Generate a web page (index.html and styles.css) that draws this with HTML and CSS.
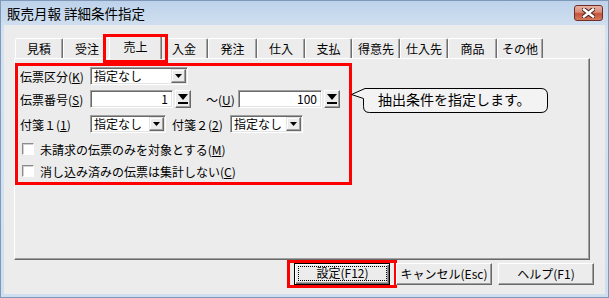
FILE: index.html
```html
<!DOCTYPE html>
<html lang="ja">
<head>
<meta charset="utf-8">
<title>販売月報 詳細条件指定</title>
<link rel="stylesheet" href="styles.css">
</head>
<body>
<div class="window">
  <div class="titlebar">
    <span class="title">販売月報 詳細条件指定</span>
    <button class="close" aria-label="閉じる">
      <svg width="13" height="10" viewBox="0 0 13 10"><path d="M2 1.5 L11 8.5 M11 1.5 L2 8.5" stroke="#4a2420" stroke-width="4.5" stroke-linecap="square" fill="none"/><path d="M2 1.5 L11 8.5 M11 1.5 L2 8.5" stroke="#fff" stroke-width="2.5" stroke-linecap="square" fill="none"/></svg>
    </button>
  </div>
  <div class="client">
    <div class="tabstrip">
      <div class="tab w48">見積</div>
      <div class="tab w48">受注</div>
      <div class="tab sel">売上</div>
      <div class="tab w48">入金</div>
      <div class="tab w49">発注</div>
      <div class="tab w48">仕入</div>
      <div class="tab w47">支払</div>
      <div class="tab w48">得意先</div>
      <div class="tab w48">仕入先</div>
      <div class="tab w49">商品</div>
      <div class="tab w46">その他</div>
    </div>
    <div class="panel">
      <div class="group">
        <div class="row r1">
          <span class="lbl">伝票区分(<u>K</u>)</span>
          <div class="combo c1"><span class="val">指定なし</span><span class="ddbtn"><svg width="7" height="4" viewBox="0 0 7 4"><polygon points="0,0 7,0 3.5,4" fill="#000"/></svg></span></div>
        </div>
        <div class="row r2">
          <span class="lbl">伝票番号(<u>S</u>)</span>
          <div class="field f1">1</div>
          <span class="spin"><svg width="10" height="10" viewBox="0 0 10 10"><polygon points="0,0 10,0 5,6" fill="#000"/><rect x="0" y="8" width="10" height="2" fill="#000"/></svg></span>
          <span class="lbl2">～(<u>U</u>)</span>
          <div class="field f2">100</div>
          <span class="spin"><svg width="10" height="10" viewBox="0 0 10 10"><polygon points="0,0 10,0 5,6" fill="#000"/><rect x="0" y="8" width="10" height="2" fill="#000"/></svg></span>
        </div>
        <div class="row r3">
          <span class="lbl">付箋１(<u>1</u>)</span>
          <div class="combo c3a"><span class="val">指定なし</span><span class="ddbtn"><svg width="7" height="4" viewBox="0 0 7 4"><polygon points="0,0 7,0 3.5,4" fill="#000"/></svg></span></div>
          <span class="lbl3">付箋２(<u>2</u>)</span>
          <div class="combo c3b"><span class="val">指定なし</span><span class="ddbtn"><svg width="7" height="4" viewBox="0 0 7 4"><polygon points="0,0 7,0 3.5,4" fill="#000"/></svg></span></div>
        </div>
        <div class="row r4">
          <span class="chk"></span>
          <span class="chktext">未請求の伝票のみを対象とする(<u>M</u>)</span>
        </div>
        <div class="row r5">
          <span class="chk"></span>
          <span class="chktext">消し込み済みの伝票は集計しない(<u>C</u>)</span>
        </div>
      </div>
    </div>
    <div class="buttons">
      <div class="hilite">
        <button class="btn default"><span class="focus">設定(F12)</span></button>
      </div>
      <button class="btn cancel">キャンセル(Esc)</button>
      <button class="btn help">ヘルプ(F1)</button>
    </div>
  </div>
  <div class="tabmark"></div>
  <div class="callout">
    <svg class="bubble" width="200" height="28" viewBox="0 0 200 28"><path d="M1.5 8.5 L15 2.5 H191 Q197.5 2.5 197.5 9 V20 Q197.5 26.5 191 26.5 H19.5 Q13.5 26.5 13.5 20.5 V12.5 Z" fill="#f3f3f3" stroke="#000" stroke-width="1"/></svg>
    <span class="ctext">抽出条件を指定します。</span>
  </div>
</div>
</body>
</html>
```

FILE: styles.css
```css
* { box-sizing: border-box; }
html, body { margin: 0; padding: 0; }
body {
  width: 609px;
  height: 298px;
  overflow: hidden;
  font-family: "Noto Sans CJK JP", "Liberation Sans", sans-serif;
  font-size: 12px;
  color: #000;
  background: #fff;
}
u { text-decoration: underline; text-underline-offset: 1px; }

.window {
  position: relative;
  width: 609px;
  height: 298px;
  border: 1px solid #7f9ab8;
  background: linear-gradient(#bdd2ea, #d4e2f1 30px, #d0dff0);
  display: flex;
  flex-direction: column;
}

.titlebar {
  height: 24px;
  flex: none;
  display: flex;
  justify-content: space-between;
  align-items: flex-start;
  padding: 3px 5px 0 6px;
}
.title { font-size: 13.5px; line-height: 18px; }
.close {
  width: 29px;
  height: 16px;
  margin-top: 1px;
  padding: 0;
  border: 1px solid #6e2f28;
  border-radius: 3px;
  background: linear-gradient(#e9b3a4, #d98872 45%, #c4503a 55%, #d47a5c);
  display: flex;
  align-items: center;
  justify-content: center;
}

.client {
  flex: 1;
  margin: 0 3px 3px;
  background: #ececec;
  padding: 10px 0 0 10px;
  display: flex;
  flex-direction: column;
}

.tabstrip {
  display: flex;
  align-items: flex-end;
  height: 23px;
  margin-left: 1px;
  flex: none;
}
.tab {
  flex: none;
  height: 20px;
  line-height: 19px;
  text-align: center;
  background: #ececec;
  border-top: 1px solid #fff;
  border-left: 1px solid #fff;
  border-right: 1px solid #6e6e6e;
  box-shadow: inset -1px 0 #a6a6a6;
  border-radius: 2px 2px 0 0;
}
.w46 { width: 46px; }
.w47 { width: 47px; }
.w48 { width: 48px; }
.w49 { width: 49px; }
.tab.sel {
  width: 53px;
  height: 24px;
  line-height: 22px;
  margin: 0 -2px -1px;
  position: relative;
  z-index: 1;
}

.panel {
  flex: none;
  width: 576px;
  height: 202px;
  border-top: 1px solid #fff;
  border-left: 1px solid #fff;
  border-right: 1px solid #696969;
  border-bottom: 1px solid #696969;
  box-shadow: inset -1px -1px #a0a0a0;
  padding-top: 4px;
}

.group {
  width: 337px;
  height: 122px;
  border: 3px solid #ff0000;
  padding-left: 2px;
}
.row { display: flex; align-items: center; height: 20px; }
.r2 { margin-top: 3px; }
.r3 { margin-top: 5px; }
.r4 { margin-top: 4px; height: 22px; }
.r5 { height: 22px; }

.lbl { width: 70px; flex: none; white-space: nowrap; }
.lbl2 { width: 32px; margin-left: 15px; flex: none; white-space: nowrap; }
.lbl3 { width: 58px; margin-left: 6px; flex: none; white-space: nowrap; }

.combo {
  flex: none;
  display: flex;
  align-items: center;
  height: 18px;
  background: #fff;
  border: 1px solid;
  border-color: #a0a0a0 #fff #fff #a0a0a0;
  box-shadow: inset 1px 1px #696969, inset -1px -1px #e3e3e3;
  padding: 1px 1px 1px 2px;
}
.c1 { width: 98px; }
.c3a { width: 76px; }
.c3b { width: 73px; }
.val { flex: 1; line-height: 14px; padding-left: 1px; white-space: nowrap; }
.ddbtn {
  flex: none;
  width: 15px;
  height: 14px;
  background: #ececec;
  border: 1px solid;
  border-color: #e3e3e3 #696969 #696969 #e3e3e3;
  box-shadow: inset -1px -1px #a0a0a0, inset 1px 1px #fff;
  display: flex;
  align-items: center;
  justify-content: center;
}

.field {
  flex: none;
  height: 18px;
  background: #fff;
  border: 1px solid;
  border-color: #a0a0a0 #fff #fff #a0a0a0;
  box-shadow: inset 1px 1px #696969, inset -1px -1px #e3e3e3;
  display: flex;
  align-items: center;
  justify-content: flex-end;
  padding-right: 4px;
  line-height: 14px;
}
.f1 { width: 83px; }
.f2 { width: 84px; }
.spin {
  flex: none;
  width: 16px;
  height: 18px;
  margin-left: 2px;
  background: #ececec;
  border: 1px solid;
  border-color: #fff #696969 #696969 #fff;
  box-shadow: inset -1px -1px #a0a0a0;
  display: flex;
  align-items: center;
  justify-content: center;
}

.chk {
  flex: none;
  width: 12px;
  height: 12px;
  margin-left: 2px;
  background: #fff;
  border: 1px solid;
  border-color: #8c8c8c #fff #fff #8c8c8c;
  box-shadow: inset 1px 1px #d0d0d0;
}
.chktext { margin-left: 6px; white-space: nowrap; }

.buttons {
  flex: none;
  height: 28px;
  display: flex;
  justify-content: flex-end;
  align-items: center;
  margin-right: 11px;
}
.hilite {
  display: flex;
  border: 3px solid #ff0000;
  padding: 0 4px;
}
.btn {
  width: 96px;
  height: 22px;
  padding: 0;
  font: inherit;
  color: #000;
  background: #ececec;
  border: 1px solid;
  border-color: #fff #696969 #696969 #fff;
  box-shadow: inset -1px -1px #a0a0a0;
  line-height: 18px;
  text-align: center;
  white-space: nowrap;
}
.btn.default {
  border: 1px solid #000;
  box-shadow: inset 1px 1px #fff, inset -1px -1px #696969, inset -2px -2px #a0a0a0;
  padding: 2px 2px 3px 3px;
  display: flex;
}
.focus {
  flex: 1;
  border: 1px dotted #000;
  line-height: 12px;
  text-align: center;
}
.cancel { margin-left: -1px; }
.help { margin-left: 6px; }

.tabmark {
  position: absolute;
  left: 102px;
  top: 33px;
  width: 65px;
  height: 29px;
  border: 3px solid #ff0000;
  z-index: 2;
}

.callout {
  position: absolute;
  left: 349px;
  top: 85px;
  width: 200px;
  height: 28px;
}
.bubble { position: absolute; left: 0; top: 0; }
.ctext {
  position: relative;
  display: block;
  padding-left: 28px;
  font-size: 14px;
  line-height: 27px;
  white-space: nowrap;
}
```
